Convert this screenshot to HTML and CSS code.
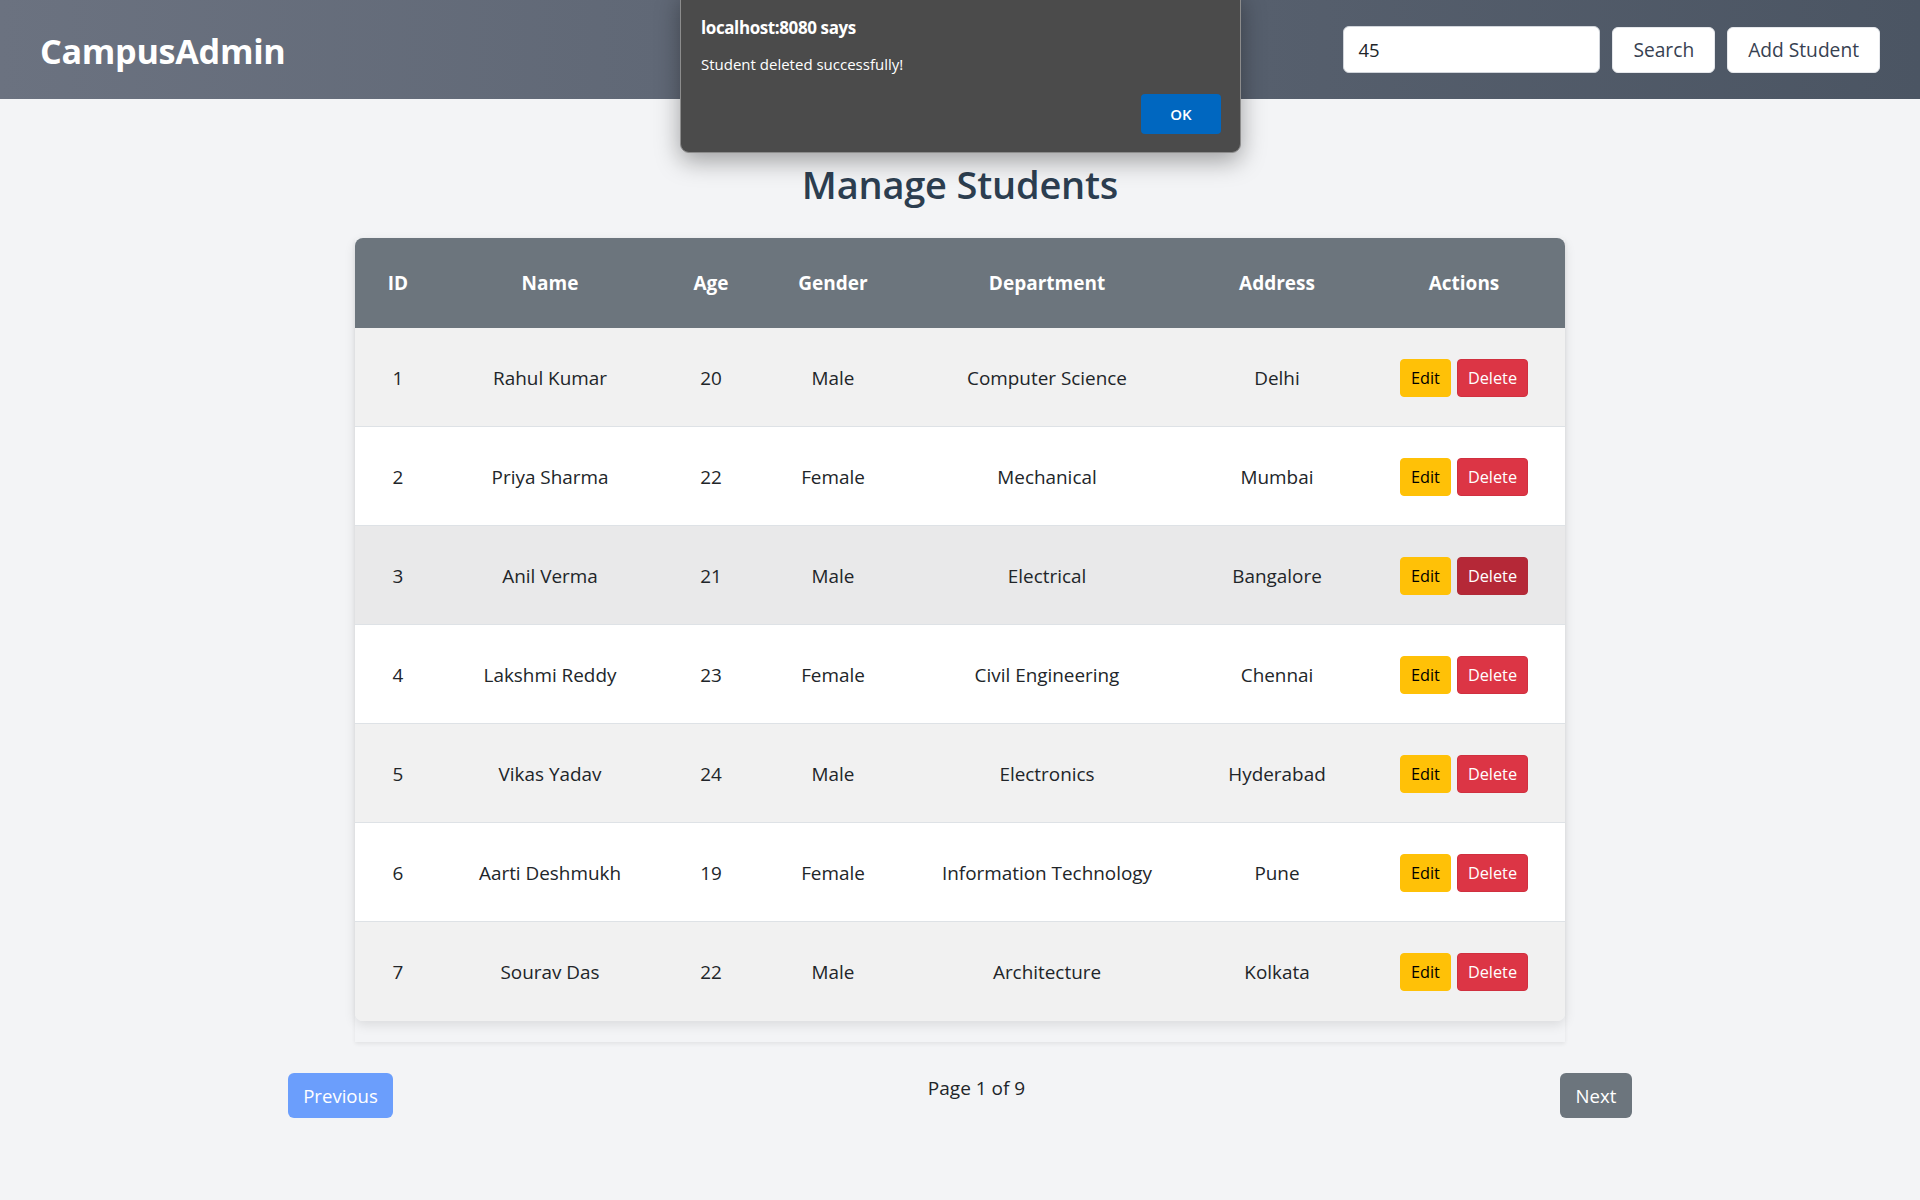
FILE: index.html
```html
<!DOCTYPE html>
<html lang="en">
<head>
<meta charset="utf-8">
<title>CampusAdmin - Manage Students</title>
<link rel="stylesheet" href="styles.css">
</head>
<body>
<header class="topbar">
  <div class="brand">CampusAdmin</div>
  <div class="top-actions">
    <input class="search-input" type="text" value="45">
    <button class="top-btn">Search</button>
    <button class="top-btn">Add Student</button>
  </div>
</header>

<main class="page">
  <h2 class="page-title">Manage Students</h2>
  <div class="table-wrap">
    <table class="students">
      <colgroup>
        <col class="c-id"><col class="c-name"><col class="c-age"><col class="c-gender"><col class="c-dept"><col class="c-addr"><col class="c-act">
      </colgroup>
      <thead>
        <tr><th>ID</th><th>Name</th><th>Age</th><th>Gender</th><th>Department</th><th>Address</th><th>Actions</th></tr>
      </thead>
      <tbody>
        <tr><td>1</td><td>Rahul Kumar</td><td>20</td><td>Male</td><td>Computer Science</td><td>Delhi</td><td><div class="acts"><button class="btn-edit">Edit</button><button class="btn-del">Delete</button></div></td></tr>
        <tr><td>2</td><td>Priya Sharma</td><td>22</td><td>Female</td><td>Mechanical</td><td>Mumbai</td><td><div class="acts"><button class="btn-edit">Edit</button><button class="btn-del">Delete</button></div></td></tr>
        <tr class="row-hover"><td>3</td><td>Anil Verma</td><td>21</td><td>Male</td><td>Electrical</td><td>Bangalore</td><td><div class="acts"><button class="btn-edit">Edit</button><button class="btn-del btn-del-hover">Delete</button></div></td></tr>
        <tr><td>4</td><td>Lakshmi Reddy</td><td>23</td><td>Female</td><td>Civil Engineering</td><td>Chennai</td><td><div class="acts"><button class="btn-edit">Edit</button><button class="btn-del">Delete</button></div></td></tr>
        <tr><td>5</td><td>Vikas Yadav</td><td>24</td><td>Male</td><td>Electronics</td><td>Hyderabad</td><td><div class="acts"><button class="btn-edit">Edit</button><button class="btn-del">Delete</button></div></td></tr>
        <tr><td>6</td><td>Aarti Deshmukh</td><td>19</td><td>Female</td><td>Information Technology</td><td>Pune</td><td><div class="acts"><button class="btn-edit">Edit</button><button class="btn-del">Delete</button></div></td></tr>
        <tr><td>7</td><td>Sourav Das</td><td>22</td><td>Male</td><td>Architecture</td><td>Kolkata</td><td><div class="acts"><button class="btn-edit">Edit</button><button class="btn-del">Delete</button></div></td></tr>
      </tbody>
    </table>
  </div>
  <div class="pager">
    <button class="pg-btn pg-prev">Previous</button>
    <span class="pg-info">Page 1 of 9</span>
    <button class="pg-btn pg-next">Next</button>
  </div>
</main>

<div class="alert-dialog">
  <div class="alert-title">localhost:8080 says</div>
  <div class="alert-msg">Student deleted successfully!</div>
  <div class="alert-foot"><button class="alert-ok">OK</button></div>
</div>
</body>
</html>
```

FILE: styles.css
```css
* { box-sizing: border-box; }
html, body { margin: 0; padding: 0; }
body {
  background: #f3f4f6;
  font-family: "Open Sans", "Noto Sans", sans-serif;
  color: #212529;
  min-height: 1200px;
  position: relative;
}
button { font-family: inherit; cursor: pointer; }

.topbar {
  height: 99px;
  padding: 0 40px;
  display: flex;
  align-items: center;
  justify-content: space-between;
  background: linear-gradient(to right, #6b7280, #4b5563);
}
.brand {
  color: #ffffff;
  font-size: 34.2px;
  font-weight: 700;
  letter-spacing: -0.3px;
  margin-top: 1px;
}
.top-actions { display: flex; align-items: center; gap: 12px; }
.search-input {
  width: 257px;
  height: 47px;
  border: 1px solid #d1d5db;
  border-radius: 6px;
  padding: 0 14px;
  font-family: inherit;
  font-size: 18.5px;
  color: #212529;
  background: #fff;
  outline: none;
}
.top-btn {
  height: 46px;
  padding: 0 20px;
  border: 1px solid #e5e7eb;
  border-radius: 6px;
  background: #ffffff;
  color: #374151;
  font-size: 19.2px;
  font-weight: 500;
}

.page { padding-top: 62px; }
.page-title {
  margin: 0 0 31px;
  text-align: center;
  font-size: 38px;
  line-height: 46px;
  font-weight: 600;
  color: #2c3e50;
  letter-spacing: -0.2px;
}
.table-wrap {
  width: 1210px;
  margin: 0 auto;
  padding-bottom: 21px;
  box-shadow: 0 2px 4px rgba(0,0,0,0.07);
}
.students {
  width: 1210px;
  table-layout: fixed;
  border-collapse: separate;
  border-spacing: 0;
  border-radius: 8px;
  overflow: hidden;
  box-shadow: 0 4px 12px rgba(0,0,0,0.1);
  font-size: 18.9px;
}
.c-id { width: 86px; }
.c-name { width: 218px; }
.c-age { width: 104px; }
.c-gender { width: 140px; }
.c-dept { width: 288px; }
.c-addr { width: 172px; }
.c-act { width: 202px; }
.students thead th {
  height: 90px;
  background: #6c757d;
  color: #ffffff;
  font-weight: 700;
  font-size: 19px;
  text-align: center;
  padding: 0;
}
.students tbody td {
  height: 99px;
  text-align: center;
  padding: 1px 0 0;
  border-bottom: 1px solid #dee2e6;
  color: #212529;
}
.students tbody tr:nth-child(odd) td { background: #f1f1f1; }
.students tbody tr:nth-child(even) td { background: #ffffff; }
.students tbody tr.row-hover td { background: #e9e9ea; }
.students tbody tr:last-child td { border-bottom: none; }
.acts { display: flex; justify-content: center; gap: 6px; }
.btn-edit, .btn-del {
  height: 38px;
  border-radius: 4px;
  font-size: 16.3px;
  padding: 0 10px;
  border: 1px solid transparent;
}
.btn-edit { background: #ffc107; border-color: #ffc107; color: #000; }
.btn-del { background: #dc3545; border-color: #d0303f; color: #fff; }
.btn-del-hover { background: #b52837; border-color: #b02a37; }

.pager {
  width: 1344px;
  margin: 31px auto 0;
  display: flex;
  justify-content: space-between;
}
.pg-btn {
  height: 45px;
  border: none;
  border-radius: 6px;
  color: #ffffff;
  font-size: 18.6px;
  padding: 0 14px;
}
.pg-prev { background: #6b9efc; width: 105px; }
.pg-next { background: #6c757d; width: 72px; }
.pg-info { font-size: 19px; line-height: 30px; color: #212529; }

.alert-dialog {
  position: absolute;
  left: 680px;
  top: -10px;
  width: 561px;
  height: 163px;
  background: #4b4b4b;
  border: 1px solid #8c8c8c;
  border-radius: 9px;
  box-shadow: 0 8px 24px rgba(0,0,0,0.35);
  padding: 25px 19px 0 20px;
  color: #ffffff;
}
.alert-title { font-size: 17px; font-weight: 700; line-height: 24px; letter-spacing: -0.4px; }
.alert-msg { font-size: 15px; line-height: 22px; margin-top: 13px; }
.alert-foot { display: flex; justify-content: flex-end; margin-top: 19px; }
.alert-ok {
  width: 80px;
  height: 40px;
  background: #0067c0;
  border: none;
  border-radius: 4px;
  color: #ffffff;
  font-size: 15px;
  font-weight: 600;
}
```
